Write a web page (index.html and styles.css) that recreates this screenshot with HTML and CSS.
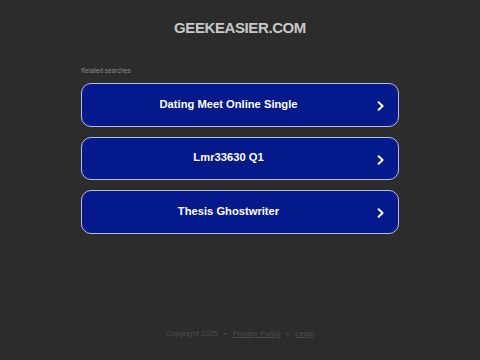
FILE: index.html
```html
<!DOCTYPE html>
<html lang="en">
<head>
<meta charset="utf-8">
<title>geekeasier.com</title>
<link rel="stylesheet" href="styles.css">
</head>
<body>
<div class="page">
  <header class="header">
    <h1 class="title">GEEKEASIER.COM</h1>
  </header>
  <main class="content">
    <p class="label">Related searches</p>
    <div class="list">
      <a class="item" href="#"><span class="item-text">Dating Meet Online Single</span><svg class="chev" width="8" height="10" viewBox="0 0 8 10"><polyline points="1.6,1.2 5.6,5 1.6,8.8" fill="none" stroke="#fff" stroke-width="1.9" stroke-linecap="round" stroke-linejoin="round"/></svg></a>
      <a class="item" href="#"><span class="item-text">Lmr33630 Q1</span><svg class="chev" width="8" height="10" viewBox="0 0 8 10"><polyline points="1.6,1.2 5.6,5 1.6,8.8" fill="none" stroke="#fff" stroke-width="1.9" stroke-linecap="round" stroke-linejoin="round"/></svg></a>
      <a class="item" href="#"><span class="item-text">Thesis Ghostwriter</span><svg class="chev" width="8" height="10" viewBox="0 0 8 10"><polyline points="1.6,1.2 5.6,5 1.6,8.8" fill="none" stroke="#fff" stroke-width="1.9" stroke-linecap="round" stroke-linejoin="round"/></svg></a>
    </div>
  </main>
  <footer class="footer">
    <span>Copyright 2025</span><span class="dot">•</span><a href="#" class="flink">Privacy Policy</a><span class="dot">•</span><a href="#" class="flink">Legal</a>
  </footer>
</div>
</body>
</html>
```
FILE: styles.css
```css
html, body {
  margin: 0;
  padding: 0;
  background: #2c2c2c;
}
body {
  font-family: "Liberation Sans", Arial, sans-serif;
}
.page {
  height: 360px;
  display: flex;
  flex-direction: column;
  align-items: center;
}
.header {
  padding-top: 19px;
}
.title {
  margin: 0;
  font-size: 15px;
  line-height: 18px;
  font-weight: bold;
  color: #c8c8c8;
  letter-spacing: -0.4px;
  text-align: center;
}
.content {
  width: 318px;
  margin-top: 30px;
}
.label {
  margin: 0 0 8px 0;
  font-size: 6.4px;
  line-height: 8px;
  color: #8a8a8a;
}
.list {
  display: flex;
  flex-direction: column;
  gap: 10px;
}
.item {
  box-sizing: border-box;
  height: 43.5px;
  border: 1px solid #b8bce2;
  border-radius: 10px;
  background: #03198c;
  display: grid;
  grid-template-columns: 1fr auto;
  column-gap: 1.5px;
  align-items: center;
  padding: 0 13.5px 0 0;
  text-decoration: none;
}
.item-text {
  color: #ffffff;
  font-size: 11.2px;
  font-weight: bold;
  text-align: center;
  padding-bottom: 2px;
}
.chev {
  display: block;
  margin-top: 3px;
}
.footer {
  margin-top: auto;
  padding-bottom: 21px;
  font-size: 7.7px;
  line-height: 10px;
  color: #4c4c4c;
  display: flex;
  align-items: center;
}
.dot {
  margin: 0 6px;
}
.flink {
  color: #4c4c4c;
  text-decoration: underline;
}
```
